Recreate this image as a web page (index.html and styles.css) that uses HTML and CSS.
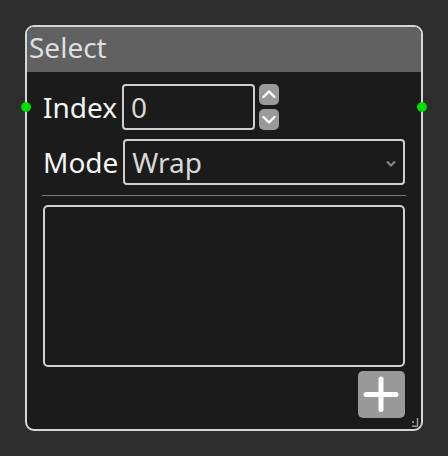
FILE: index.html
```html
<!DOCTYPE html>
<html>
<head>
<meta charset="utf-8">
<link rel="stylesheet" href="styles.css">
</head>
<body>
<div class="node">
  <div class="title">Select</div>
  <span class="port port-in"></span>
  <span class="port port-out"></span>
  <div class="body">
    <div class="row row-index">
      <span class="label">Index</span>
      <div class="input">0</div>
      <div class="spin">
        <div class="spin-btn"><svg width="20" height="21" viewBox="0 0 20 21"><polyline points="4.5,13 10,7.5 15.5,13" fill="none" stroke="#fff" stroke-width="2.4" stroke-linecap="round" stroke-linejoin="round"/></svg></div>
        <div class="spin-btn"><svg width="20" height="21" viewBox="0 0 20 21"><polyline points="4.5,8 10,13.5 15.5,8" fill="none" stroke="#fff" stroke-width="2.4" stroke-linecap="round" stroke-linejoin="round"/></svg></div>
      </div>
    </div>
    <div class="row row-mode">
      <span class="label">Mode</span>
      <div class="select">
        <span>Wrap</span>
        <svg class="caret" width="10" height="7" viewBox="0 0 10 7"><polyline points="1,1.5 5,5.5 9,1.5" fill="none" stroke="#8a8a8a" stroke-width="2"/></svg>
      </div>
    </div>
    <div class="sep"></div>
    <div class="textarea"></div>
    <div class="actions">
      <div class="add-btn"><svg width="47" height="47" viewBox="0 0 47 47"><line x1="8" y1="23.5" x2="38" y2="23.5" stroke="#fff" stroke-width="5" stroke-linecap="round"/><line x1="23" y1="8" x2="23" y2="38.5" stroke="#fff" stroke-width="5" stroke-linecap="round"/></svg></div>
    </div>
  </div>
  <svg class="grip" width="10" height="11" viewBox="0 0 10 11"><line x1="8.5" y1="1" x2="8.5" y2="9" stroke="#9a9a9a" stroke-width="1.5"/><line x1="3" y1="9.2" x2="9" y2="9.2" stroke="#9a9a9a" stroke-width="1.5"/><rect x="3" y="4" width="2" height="2" fill="#8a8a8a"/></svg>
</div>
</body>
</html>
```

FILE: styles.css
```css
html, body {
  margin: 0;
  padding: 0;
  background: #2d2d2d;
}
body {
  padding: 25px;
  font-family: "Noto Sans", "Open Sans", sans-serif;
}
.node {
  position: relative;
  box-sizing: border-box;
  width: 398px;
  height: 406px;
  border: 2px solid #d6d6d6;
  border-radius: 9px;
  background: #1b1b1b;
  display: flex;
  flex-direction: column;
}
.title {
  height: 45px;
  box-sizing: border-box;
  padding: 0 0 5px 2px;
  line-height: 40px;
  font-size: 28px;
  color: #dedede;
  background: #616161;
  border-radius: 7px 7px 0 0;
}
.port {
  position: absolute;
  width: 10px;
  height: 10px;
  border-radius: 50%;
  background: #00dd00;
  top: 75px;
}
.port-in { left: -6px; }
.port-out { right: -6px; }
.body {
  flex: 1;
  display: flex;
  flex-direction: column;
  padding: 12px 16px 10px 16px;
}
.row {
  display: flex;
  align-items: center;
  gap: 5px;
}
.label {
  font-size: 28px;
  line-height: 46px;
  color: #f4f4f4;
}
.input, .select {
  box-sizing: border-box;
  height: 46px;
  border: 2px solid #cfcfcf;
  border-radius: 4px;
  font-size: 28px;
  line-height: 42px;
  color: #d8d8d8;
}
.input {
  width: 133px;
  padding-left: 7px;
}
.spin {
  display: flex;
  flex-direction: column;
  gap: 4px;
  margin-left: -1px;
}
.spin-btn {
  width: 20px;
  height: 21px;
  border-radius: 5px;
  background: #9a9a9a;
  display: flex;
}
.row-mode {
  margin-top: 9px;
}
.select {
  flex: 1;
  display: flex;
  align-items: center;
  justify-content: space-between;
  padding: 0 7px 0 7px;
}
.caret {
  margin-top: 2px;
}
.sep {
  height: 1px;
  background: #7a7a7a;
  margin: 10px -1px 9px -1px;
}
.textarea {
  box-sizing: border-box;
  height: 162px;
  border: 2px solid #d2d2d2;
  border-radius: 5px;
}
.actions {
  display: flex;
  justify-content: flex-end;
  margin-top: 4px;
}
.add-btn {
  width: 47px;
  height: 47px;
  border-radius: 5px;
  background: #999999;
  display: flex;
}
.grip {
  position: absolute;
  right: 2px;
  bottom: 1px;
}
```
